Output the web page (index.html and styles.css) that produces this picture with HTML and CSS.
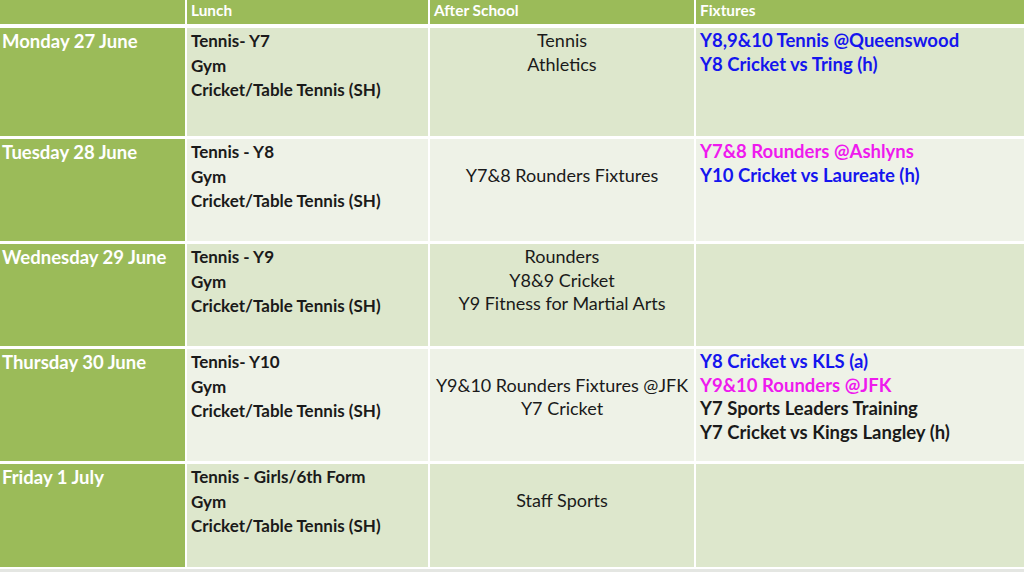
FILE: index.html
```html
<!DOCTYPE html>
<html>
<head>
<meta charset="utf-8">
<link rel="stylesheet" href="styles.css">
</head>
<body>
<div class="timetable">
  <div class="hd"></div>
  <div class="hd">Lunch</div>
  <div class="hd">After School</div>
  <div class="hd">Fixtures</div>

  <div class="day">Monday 27 June</div>
  <div class="cell dark lunch"><p>Tennis- Y7</p><p>Gym</p><p>Cricket/Table Tennis (SH)</p></div>
  <div class="cell dark after"><p>Tennis</p><p>Athletics</p></div>
  <div class="cell dark fix"><p class="blue">Y8,9&amp;10 Tennis @Queenswood</p><p class="blue">Y8 Cricket vs Tring (h)</p></div>

  <div class="day">Tuesday 28 June</div>
  <div class="cell light lunch"><p>Tennis - Y8</p><p>Gym</p><p>Cricket/Table Tennis (SH)</p></div>
  <div class="cell light after"><p>&nbsp;</p><p>Y7&amp;8 Rounders Fixtures</p></div>
  <div class="cell light fix"><p class="pink">Y7&amp;8 Rounders @Ashlyns</p><p class="blue">Y10 Cricket vs Laureate (h)</p></div>

  <div class="day">Wednesday 29 June</div>
  <div class="cell dark lunch"><p>Tennis - Y9</p><p>Gym</p><p>Cricket/Table Tennis (SH)</p></div>
  <div class="cell dark after"><p>Rounders</p><p>Y8&amp;9 Cricket</p><p>Y9 Fitness for Martial Arts</p></div>
  <div class="cell dark fix"></div>

  <div class="day">Thursday 30 June</div>
  <div class="cell light lunch"><p>Tennis- Y10</p><p>Gym</p><p>Cricket/Table Tennis (SH)</p></div>
  <div class="cell light after"><p>&nbsp;</p><p>Y9&amp;10 Rounders Fixtures @JFK</p><p>Y7 Cricket</p></div>
  <div class="cell light fix"><p class="blue">Y8 Cricket vs KLS (a)</p><p class="pink">Y9&amp;10 Rounders @JFK</p><p>Y7 Sports Leaders Training</p><p>Y7 Cricket vs Kings Langley (h)</p></div>

  <div class="day">Friday 1 July</div>
  <div class="cell dark lunch"><p>Tennis - Girls/6th Form</p><p>Gym</p><p>Cricket/Table Tennis (SH)</p></div>
  <div class="cell dark after"><p>&nbsp;</p><p>Staff Sports</p></div>
  <div class="cell dark fix"></div>
</div>
<div class="tail"></div>
</body>
</html>
```

FILE: styles.css
```css
html, body {
  margin: 0;
  padding: 0;
  background: #ffffff;
  overflow: hidden;
}
body {
  font-family: Lato, "Liberation Sans", sans-serif;
  color: #1a1a1a;
}
.timetable {
  display: grid;
  grid-template-columns: 185px 241px 264px 1fr;
  grid-template-rows: 25px 109px 103px 103px 113px 104px;
  column-gap: 2px;
  row-gap: 2px;
  background: #ffffff;
  width: 1024px;
}
.hd {
  background: #9bbb59;
  color: #ffffff;
  font-weight: 700;
  font-size: 15.4px;
  line-height: 20px;
  padding: 0 4px;
  margin-bottom: 1px;
  white-space: nowrap;
}
.day {
  background: #9bbb59;
  color: #ffffff;
  font-weight: 700;
  font-size: 18.5px;
  line-height: 24px;
  padding: 1px 2px 0;
  margin-top: 1px;
  white-space: nowrap;
}
.cell {
  padding: 1px 4px 0;
  margin-top: 1px;
  white-space: nowrap;
}
.cell p { margin: 0; }
.dark { background: #dde7cc; }
.light { background: #eef2e7; }
.lunch {
  font-weight: 700;
  font-size: 17px;
  line-height: 24.5px;
}
.after {
  text-align: center;
  font-size: 18px;
  line-height: 23.5px;
}
.fix {
  font-weight: 700;
  font-size: 18.5px;
  line-height: 23.7px;
}
.blue { color: #1515ee; }
.pink { color: #ee1aee; }
.tail {
  height: 3px;
  margin-top: 2px;
  background: #e4e6e2;
}
```
